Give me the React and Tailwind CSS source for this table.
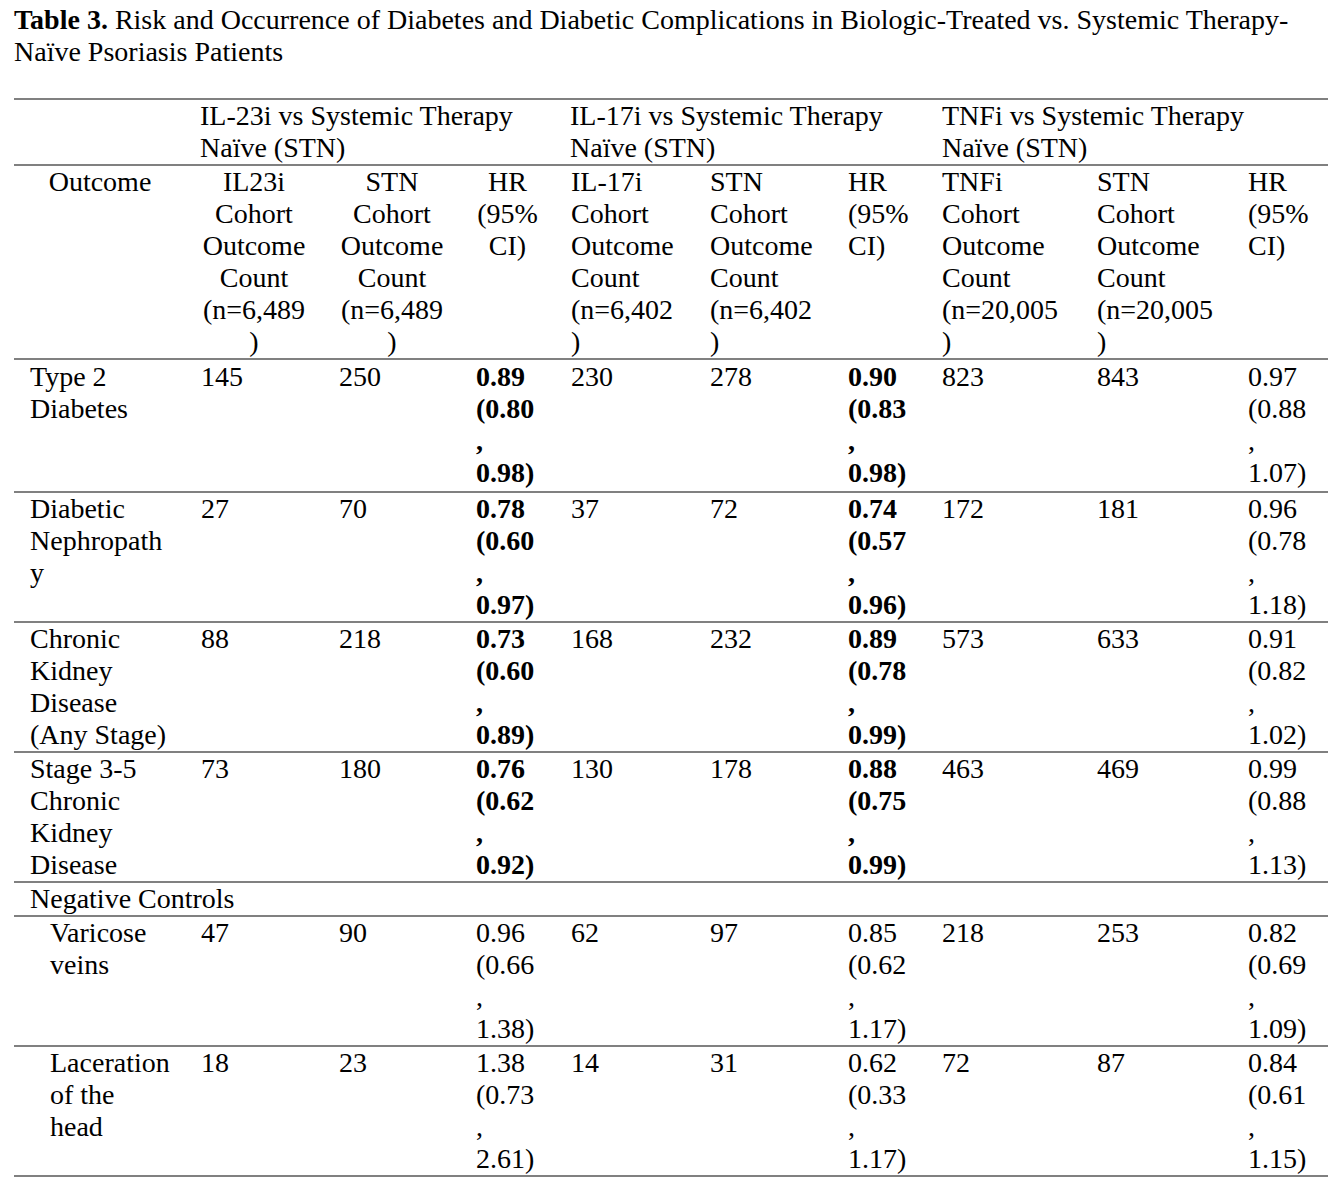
import React from "react";

const COLS =
  "grid grid-cols-[187px_138px_137px_95px_139px_138px_94px_155px_151px_80px]";

const rows = [
  {
    o: ["Type 2", "Diabetes"],
    c: [
      "145",
      "250",
      { b: true, l: ["0.89", "(0.80", ",", "0.98)"] },
      "230",
      "278",
      { b: true, l: ["0.90", "(0.83", ",", "0.98)"] },
      "823",
      "843",
      { b: false, l: ["0.97", "(0.88", ",", "1.07)"] },
    ],
  },
  {
    o: ["Diabetic", "Nephropath", "y"],
    c: [
      "27",
      "70",
      { b: true, l: ["0.78", "(0.60", ",", "0.97)"] },
      "37",
      "72",
      { b: true, l: ["0.74", "(0.57", ",", "0.96)"] },
      "172",
      "181",
      { b: false, l: ["0.96", "(0.78", ",", "1.18)"] },
    ],
  },
  {
    o: ["Chronic", "Kidney", "Disease", "(Any Stage)"],
    c: [
      "88",
      "218",
      { b: true, l: ["0.73", "(0.60", ",", "0.89)"] },
      "168",
      "232",
      { b: true, l: ["0.89", "(0.78", ",", "0.99)"] },
      "573",
      "633",
      { b: false, l: ["0.91", "(0.82", ",", "1.02)"] },
    ],
  },
  {
    o: ["Stage 3-5", "Chronic", "Kidney", "Disease"],
    c: [
      "73",
      "180",
      { b: true, l: ["0.76", "(0.62", ",", "0.92)"] },
      "130",
      "178",
      { b: true, l: ["0.88", "(0.75", ",", "0.99)"] },
      "463",
      "469",
      { b: false, l: ["0.99", "(0.88", ",", "1.13)"] },
    ],
  },
];

const negRows = [
  {
    o: ["Varicose", "veins"],
    c: [
      "47",
      "90",
      { b: false, l: ["0.96", "(0.66", ",", "1.38)"] },
      "62",
      "97",
      { b: false, l: ["0.85", "(0.62", ",", "1.17)"] },
      "218",
      "253",
      { b: false, l: ["0.82", "(0.69", ",", "1.09)"] },
    ],
  },
  {
    o: ["Laceration", "of the", "head"],
    c: [
      "18",
      "23",
      { b: false, l: ["1.38", "(0.73", ",", "2.61)"] },
      "14",
      "31",
      { b: false, l: ["0.62", "(0.33", ",", "1.17)"] },
      "72",
      "87",
      { b: false, l: ["0.84", "(0.61", ",", "1.15)"] },
    ],
  },
];

function Lines({ lines, bold }) {
  return (
    <div className={bold ? "font-bold" : ""}>
      {lines.map((t, i) => (
        <div key={i} className="whitespace-nowrap">
          {t}
        </div>
      ))}
    </div>
  );
}

function Cell({ v }) {
  if (typeof v === "string") return <div className="whitespace-nowrap">{v}</div>;
  return <Lines lines={v.l} bold={v.b} />;
}

function DataRow({ row, indent, first }) {
  return (
    <div
      className={`${COLS} border-b-2 border-[#808080] ${first ? "pt-[1px] pb-[2px]" : ""}`}
    >
      <div className={indent ? "pl-[36px]" : "pl-[16px]"}>
        <Lines lines={row.o} />
      </div>
      {row.c.map((v, i) => (
        <div key={i}>
          <Cell v={v} />
        </div>
      ))}
    </div>
  );
}

function Centered({ lines, w }) {
  return (
    <div className={w}>
      {lines.map((t, i) => (
        <div key={i} className="whitespace-nowrap text-center">
          {t}
        </div>
      ))}
    </div>
  );
}

export default function App() {
  return (
    <div className="min-h-[1190px] w-[1344px] bg-white text-black font-['Liberation_Serif','Times_New_Roman',serif] text-[28px] leading-[32px]">
      <div className="pl-[14px] pt-[4px]">
        <div className="whitespace-nowrap">
          <span className="font-bold">Table 3.</span> Risk and Occurrence of
          Diabetes and Diabetic Complications in Biologic-Treated vs. Systemic
          Therapy-
        </div>
        <div className="whitespace-nowrap">Naïve Psoriasis Patients</div>
      </div>

      <div className="ml-[14px] mt-[30px] w-[1314px] border-t-2 border-[#808080]">
        {/* header row 1 */}
        <div className={`${COLS} border-b-2 border-[#808080]`}>
          <div></div>
          <div className="col-span-3 -ml-[1px]">
            <div className="whitespace-nowrap">IL-23i vs Systemic Therapy</div>
            <div className="whitespace-nowrap">Naïve (STN)</div>
          </div>
          <div className="col-span-3 -ml-[1px]">
            <div className="whitespace-nowrap">IL-17i vs Systemic Therapy</div>
            <div className="whitespace-nowrap">Naïve (STN)</div>
          </div>
          <div className="col-span-3">
            <div className="whitespace-nowrap">TNFi vs Systemic Therapy</div>
            <div className="whitespace-nowrap">Naïve (STN)</div>
          </div>
        </div>

        {/* header row 2 */}
        <div className={`${COLS} border-b-2 border-[#808080]`}>
          <div className="pl-[16px]">
            <Centered lines={["Outcome"]} w="w-[140px]" />
          </div>
          <div>
            <Centered
              lines={["IL23i", "Cohort", "Outcome", "Count", "(n=6,489", ")"]}
              w="w-[106px]"
            />
          </div>
          <div>
            <Centered
              lines={["STN", "Cohort", "Outcome", "Count", "(n=6,489", ")"]}
              w="w-[106px]"
            />
          </div>
          <div>
            <Centered lines={["HR", "(95%", "CI)"]} w="w-[63px]" />
          </div>
          <div>
            <Lines lines={["IL-17i", "Cohort", "Outcome", "Count", "(n=6,402", ")"]} />
          </div>
          <div>
            <Lines lines={["STN", "Cohort", "Outcome", "Count", "(n=6,402", ")"]} />
          </div>
          <div>
            <Lines lines={["HR", "(95%", "CI)"]} />
          </div>
          <div>
            <Lines lines={["TNFi", "Cohort", "Outcome", "Count", "(n=20,005", ")"]} />
          </div>
          <div>
            <Lines lines={["STN", "Cohort", "Outcome", "Count", "(n=20,005", ")"]} />
          </div>
          <div>
            <Lines lines={["HR", "(95%", "CI)"]} />
          </div>
        </div>

        {rows.map((r, i) => (
          <DataRow key={i} row={r} first={i === 0} />
        ))}

        <div className="border-b-2 border-[#808080] pl-[16px]">
          <div className="whitespace-nowrap">Negative Controls</div>
        </div>

        {negRows.map((r, i) => (
          <DataRow key={i} row={r} indent />
        ))}
      </div>
    </div>
  );
}
